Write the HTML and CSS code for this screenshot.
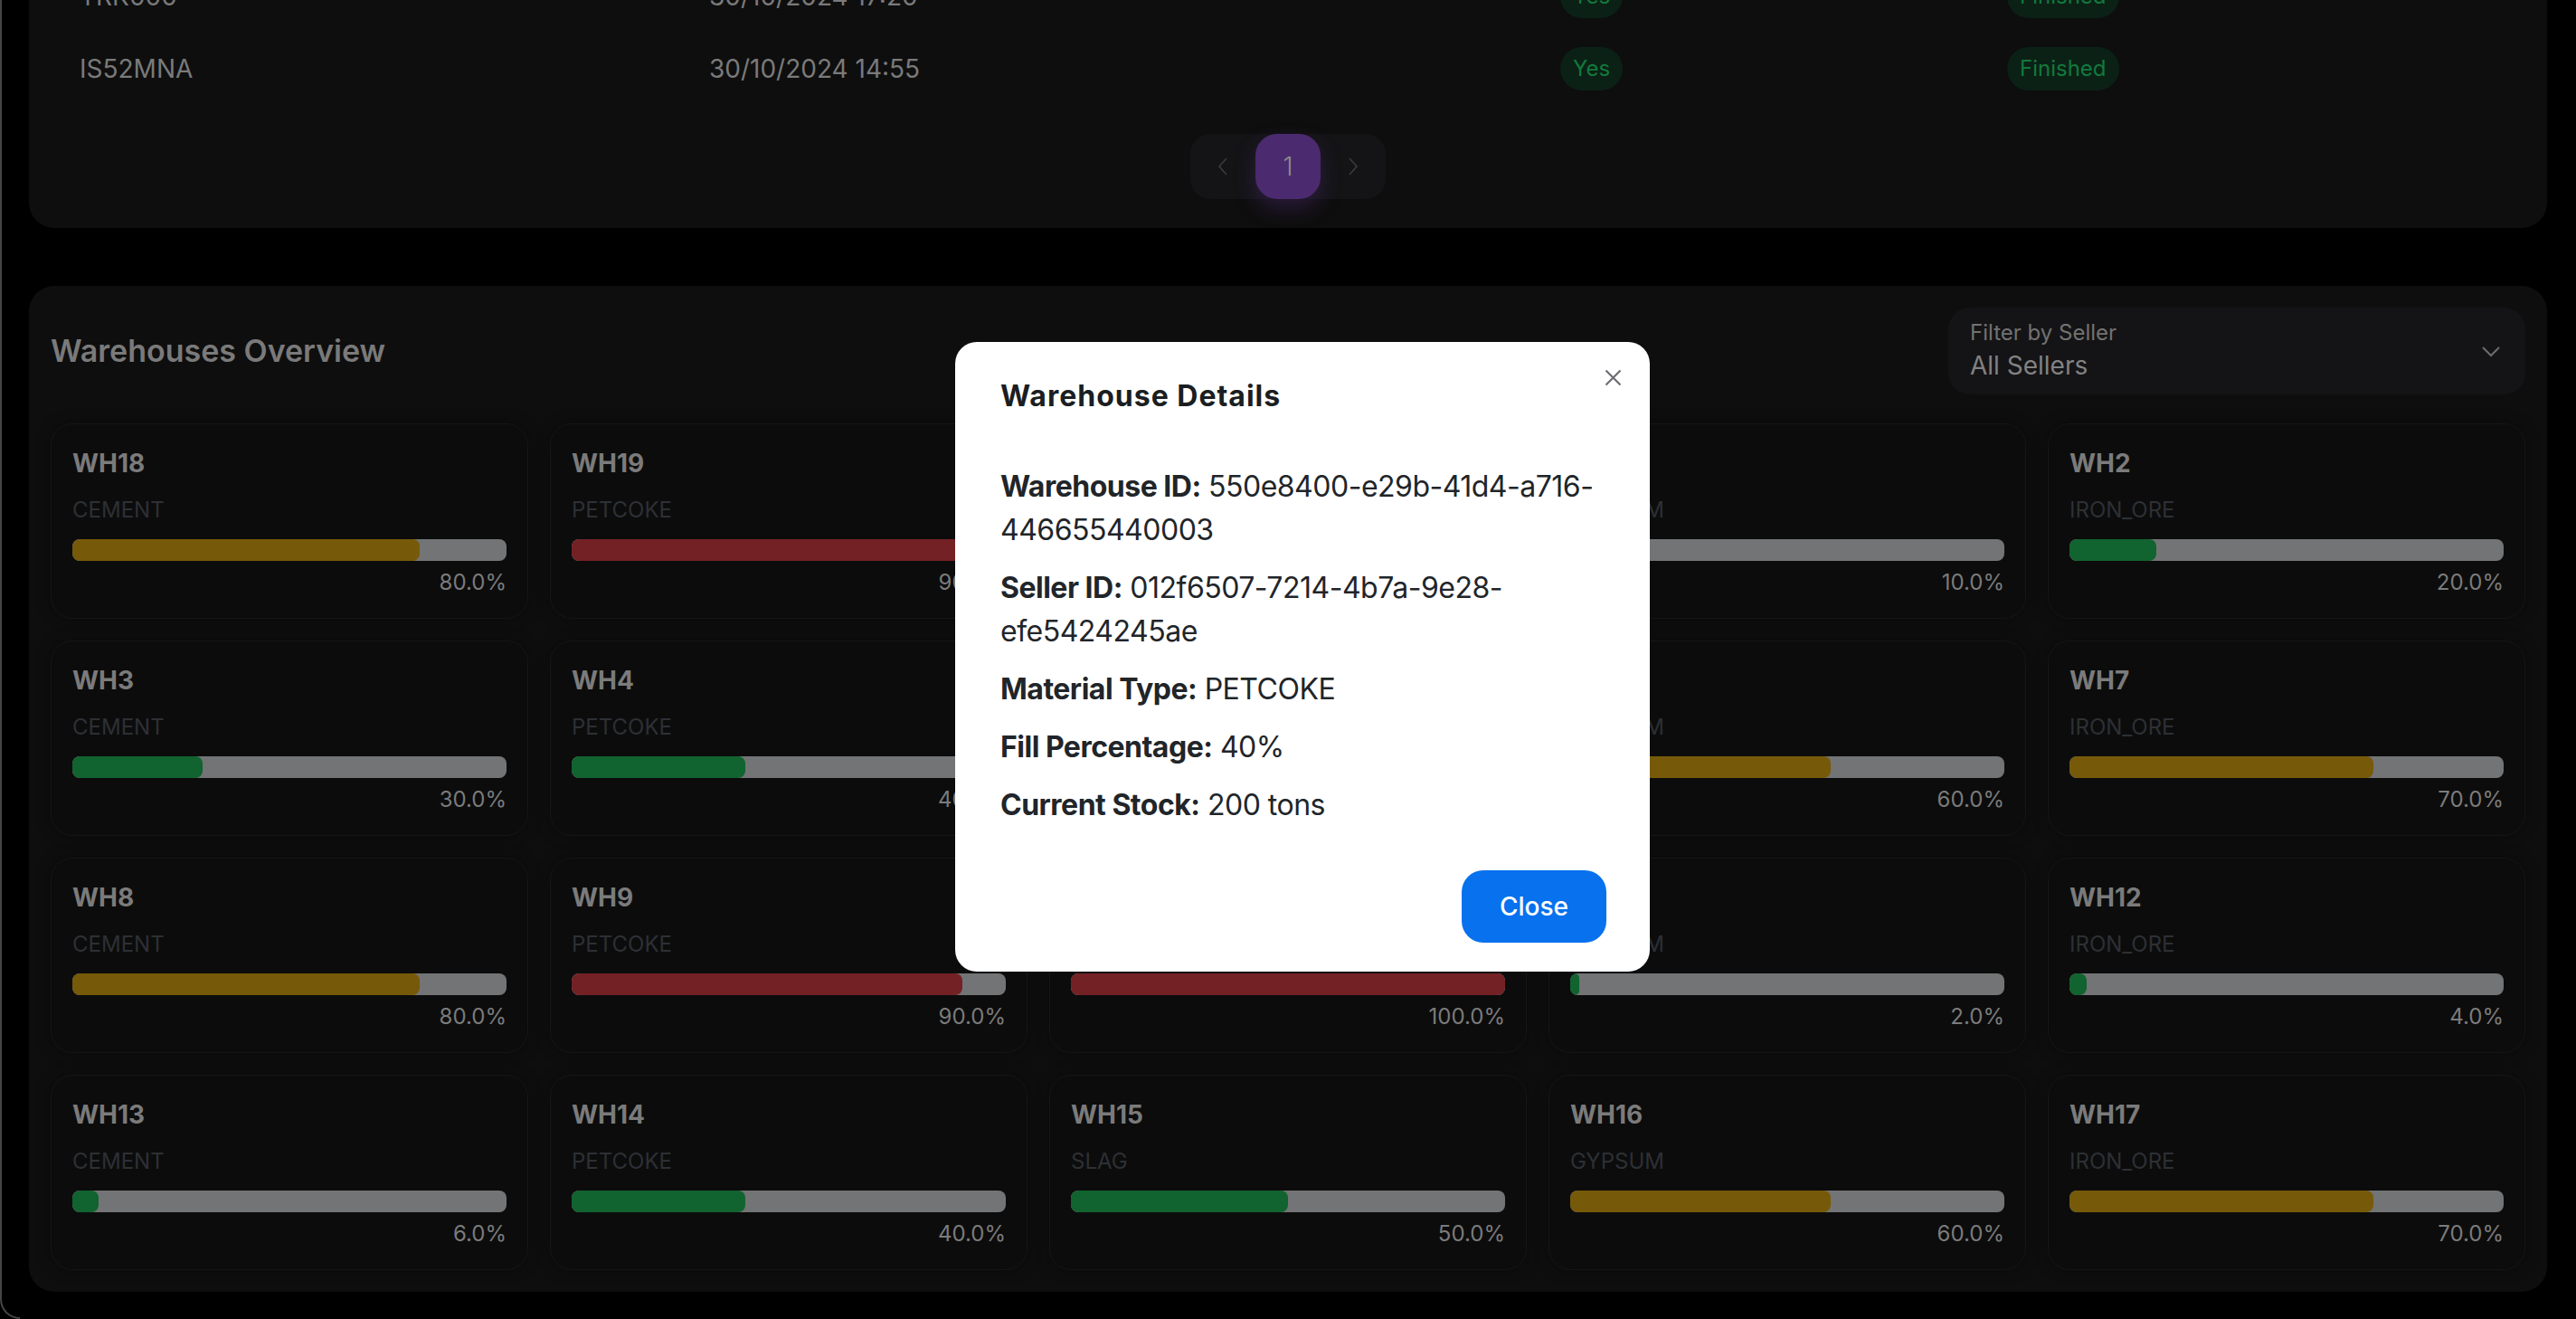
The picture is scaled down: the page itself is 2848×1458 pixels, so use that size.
FILE: index.html
```html
<!DOCTYPE html>
<html lang="en">
<head>
<meta charset="utf-8">
<title>Warehouses</title>
<link rel="stylesheet" href="styles.css">
</head>
<body>
<div class="frame"></div>
<main class="page">
  <section class="table-card">
    <div class="row">
      <span>TRK000</span>
      <span>30/10/2024 17:20</span>
      <span class="chip">Yes</span>
      <span class="chip">Finished</span>
    </div>
    <div class="row">
      <span>IS52MNA</span>
      <span>30/10/2024 14:55</span>
      <span class="chip">Yes</span>
      <span class="chip">Finished</span>
    </div>
    <div class="pager">
      <div class="pager-inner">
        <span class="pg"><svg width="24" height="24" viewBox="0 0 24 24"><path d="M16 3 L8 12 L16 21" fill="none" stroke="#3b3b3e" stroke-width="1.6"/></svg></span>
        <span class="pg active">1</span>
        <span class="pg"><svg width="24" height="24" viewBox="0 0 24 24"><path d="M8 3 L16 12 L8 21" fill="none" stroke="#3b3b3e" stroke-width="1.6"/></svg></span>
      </div>
    </div>
  </section>

  <section class="section">
    <div class="section-head">
      <h2 class="section-title">Warehouses Overview</h2>
      <div class="filter">
        <div class="filter-text">
          <div class="filter-label">Filter by Seller</div>
          <div class="filter-value">All Sellers</div>
        </div>
        <svg class="chev" width="24" height="24" viewBox="0 0 24 24"><path d="M3 8 L12 17 L21 8" fill="none" stroke="#6c6c6c" stroke-width="2"/></svg>
      </div>
    </div>
    <div class="grid">
      <div class="wh"><div class="wh-name">WH18</div><div class="wh-mat">CEMENT</div><div class="bar"><div class="fill yellow" style="width:80%"></div></div><div class="pct">80.0%</div></div>
      <div class="wh"><div class="wh-name">WH19</div><div class="wh-mat">PETCOKE</div><div class="bar"><div class="fill red" style="width:90%"></div></div><div class="pct">90.0%</div></div>
      <div class="wh"><div class="wh-name">WH20</div><div class="wh-mat">SLAG</div><div class="bar"><div class="fill red" style="width:100%"></div></div><div class="pct">100.0%</div></div>
      <div class="wh"><div class="wh-name">WH1</div><div class="wh-mat">GYPSUM</div><div class="bar"><div class="fill green" style="width:10%"></div></div><div class="pct">10.0%</div></div>
      <div class="wh"><div class="wh-name">WH2</div><div class="wh-mat">IRON_ORE</div><div class="bar"><div class="fill green" style="width:20%"></div></div><div class="pct">20.0%</div></div>

      <div class="wh"><div class="wh-name">WH3</div><div class="wh-mat">CEMENT</div><div class="bar"><div class="fill green" style="width:30%"></div></div><div class="pct">30.0%</div></div>
      <div class="wh"><div class="wh-name">WH4</div><div class="wh-mat">PETCOKE</div><div class="bar"><div class="fill green" style="width:40%"></div></div><div class="pct">40.0%</div></div>
      <div class="wh"><div class="wh-name">WH5</div><div class="wh-mat">SLAG</div><div class="bar"><div class="fill green" style="width:50%"></div></div><div class="pct">50.0%</div></div>
      <div class="wh"><div class="wh-name">WH6</div><div class="wh-mat">GYPSUM</div><div class="bar"><div class="fill yellow" style="width:60%"></div></div><div class="pct">60.0%</div></div>
      <div class="wh"><div class="wh-name">WH7</div><div class="wh-mat">IRON_ORE</div><div class="bar"><div class="fill yellow" style="width:70%"></div></div><div class="pct">70.0%</div></div>

      <div class="wh"><div class="wh-name">WH8</div><div class="wh-mat">CEMENT</div><div class="bar"><div class="fill yellow" style="width:80%"></div></div><div class="pct">80.0%</div></div>
      <div class="wh"><div class="wh-name">WH9</div><div class="wh-mat">PETCOKE</div><div class="bar"><div class="fill red" style="width:90%"></div></div><div class="pct">90.0%</div></div>
      <div class="wh"><div class="wh-name">WH10</div><div class="wh-mat">SLAG</div><div class="bar"><div class="fill red" style="width:100%"></div></div><div class="pct">100.0%</div></div>
      <div class="wh"><div class="wh-name">WH11</div><div class="wh-mat">GYPSUM</div><div class="bar"><div class="fill green" style="width:2%"></div></div><div class="pct">2.0%</div></div>
      <div class="wh"><div class="wh-name">WH12</div><div class="wh-mat">IRON_ORE</div><div class="bar"><div class="fill green" style="width:4%"></div></div><div class="pct">4.0%</div></div>

      <div class="wh"><div class="wh-name">WH13</div><div class="wh-mat">CEMENT</div><div class="bar"><div class="fill green" style="width:6%"></div></div><div class="pct">6.0%</div></div>
      <div class="wh"><div class="wh-name">WH14</div><div class="wh-mat">PETCOKE</div><div class="bar"><div class="fill green" style="width:40%"></div></div><div class="pct">40.0%</div></div>
      <div class="wh"><div class="wh-name">WH15</div><div class="wh-mat">SLAG</div><div class="bar"><div class="fill green" style="width:50%"></div></div><div class="pct">50.0%</div></div>
      <div class="wh"><div class="wh-name">WH16</div><div class="wh-mat">GYPSUM</div><div class="bar"><div class="fill yellow" style="width:60%"></div></div><div class="pct">60.0%</div></div>
      <div class="wh"><div class="wh-name">WH17</div><div class="wh-mat">IRON_ORE</div><div class="bar"><div class="fill yellow" style="width:70%"></div></div><div class="pct">70.0%</div></div>
    </div>
  </section>
</main>

<div class="backdrop">
  <div class="modal" role="dialog">
    <button class="modal-x" aria-label="Close"><svg width="19" height="19" viewBox="0 0 19 19"><path d="M1.5 1.5 L17.5 17.5 M17.5 1.5 L1.5 17.5" stroke="#6c6c72" stroke-width="2.2" fill="none"/></svg></button>
    <div class="modal-head"><h5 class="modal-title">Warehouse Details</h5></div>
    <div class="modal-body">
      <p><b>Warehouse ID:</b> 550e8400-e29b-41d4-a716-446655440003</p>
      <p><b>Seller ID:</b> 012f6507-7214-4b7a-9e28-efe5424245ae</p>
      <p><b>Material Type:</b> PETCOKE</p>
      <p><b>Fill Percentage:</b> 40%</p>
      <p><b>Current Stock:</b> 200 tons</p>
    </div>
    <div class="modal-foot"><button class="btn-close">Close</button></div>
  </div>
</div>
</body>
</html>
```
FILE: styles.css
```css
* { box-sizing: border-box; margin: 0; padding: 0; }
html, body { height: 100%; }
body {
  background: #000;
  font-family: Inter, "Noto Sans", sans-serif;
  overflow: hidden;
}
.frame {
  position: fixed;
  left: 0;
  top: 0;
  bottom: 0;
  width: 22px;
  border-left: 2px solid #464646;
  border-bottom: 2px solid #464646;
  border-bottom-left-radius: 22px;
  pointer-events: none;
}
.page {
  display: flex;
  flex-direction: column;
  gap: 64px;
  padding: 0 32px;
  margin-top: -44px;
}
.table-card {
  background: #0e0e0e;
  border-radius: 28px;
  padding-bottom: 32px;
}
.row {
  display: grid;
  grid-template-columns: 696px 941px 494px 1fr;
  align-items: center;
  height: 80px;
  padding-left: 56px;
  font-size: 28px;
  color: #7a7a7a;
}
.chip {
  justify-self: start;
  height: 48px;
  line-height: 48px;
  padding: 0 14px;
  border-radius: 24px;
  background: #0b2116;
  color: #12793c;
  font-size: 24px;
}
.pager { display: flex; justify-content: center; margin-top: 32px; }
.pager-inner { display: flex; background: #141416; border-radius: 22px; }
.pg {
  width: 72px;
  height: 72px;
  display: flex;
  align-items: center;
  justify-content: center;
  font-size: 28px;
  color: #8c8c8c;
}
.pg.active {
  background: #4b2a6f;
  border-radius: 24px;
  box-shadow: 0 10px 22px rgba(75, 42, 111, 0.45);
  font-weight: 300;
}
.section {
  background: #0e0e0e;
  border-radius: 28px;
  padding: 24px;
}
.section-head {
  display: flex;
  justify-content: space-between;
  align-items: center;
  margin-bottom: 32px;
}
.section-title {
  font-size: 34px;
  line-height: 44px;
  font-weight: 600;
  color: #7a7a7a;
}
.filter {
  width: 638px;
  height: 96px;
  background: #141416;
  border-radius: 24px;
  padding: 12px 26px 12px 24px;
  display: flex;
  align-items: center;
  justify-content: space-between;
}
.filter-label { font-size: 24px; line-height: 32px; color: #727272; }
.filter-value { font-size: 28px; line-height: 40px; color: #828282; }
.grid {
  display: grid;
  grid-template-columns: repeat(5, 1fr);
  gap: 24px;
}
.wh {
  background: #0c0c0c;
  border: 1px solid #161616;
  border-radius: 24px;
  padding: 23px;
  box-shadow: 0 0 16px rgba(0, 0, 0, 0.35);
}
.wh-name {
  font-size: 28px;
  line-height: 40px;
  font-weight: 700;
  color: #7b7b7b;
  margin-bottom: 16px;
}
.wh-mat {
  font-size: 24px;
  line-height: 32px;
  color: #2d3035;
  margin-bottom: 16px;
}
.bar {
  height: 24px;
  border-radius: 8px;
  background: #737475;
  overflow: hidden;
}
.fill { height: 100%; border-radius: 8px; }
.fill.yellow { background: #765a09; }
.fill.red { background: #742125; }
.fill.green { background: #11632f; }
.pct {
  margin-top: 8px;
  font-size: 24px;
  line-height: 32px;
  text-align: right;
  color: #7b7b7b;
}
.backdrop {
  position: fixed;
  inset: 0;
  display: flex;
  align-items: center;
  justify-content: center;
  padding-left: 32px;
  padding-bottom: 6px;
}
.modal {
  position: relative;
  width: 768px;
  background: #fff;
  border-radius: 24px;
  color: #212529;
}
.modal-x {
  position: absolute;
  top: 30px;
  right: 31px;
  width: 19px;
  height: 19px;
  border: 0;
  background: none;
  display: block;
}
.modal-x svg { display: block; }
.modal-head { padding: 40px 50px 0; }
.modal-title {
  font-size: 32px;
  line-height: 40px;
  font-weight: 700;
  letter-spacing: 1px;
  color: #1b1e21;
}
.modal-body { padding: 56px 46px 0 50px; }
.modal-body p {
  font-size: 32px;
  line-height: 48px;
  letter-spacing: -0.5px;
  margin-bottom: 16px;
}
.modal-body b { font-weight: 700; }
.modal-foot {
  display: flex;
  justify-content: flex-end;
  padding: 32px 48px 32px;
}
.btn-close {
  width: 160px;
  height: 80px;
  border: 0;
  border-radius: 24px;
  background: #0771ee;
  color: #fff;
  font-family: Inter, "Noto Sans", sans-serif;
  font-size: 28px;
  font-weight: 500;
}
```
